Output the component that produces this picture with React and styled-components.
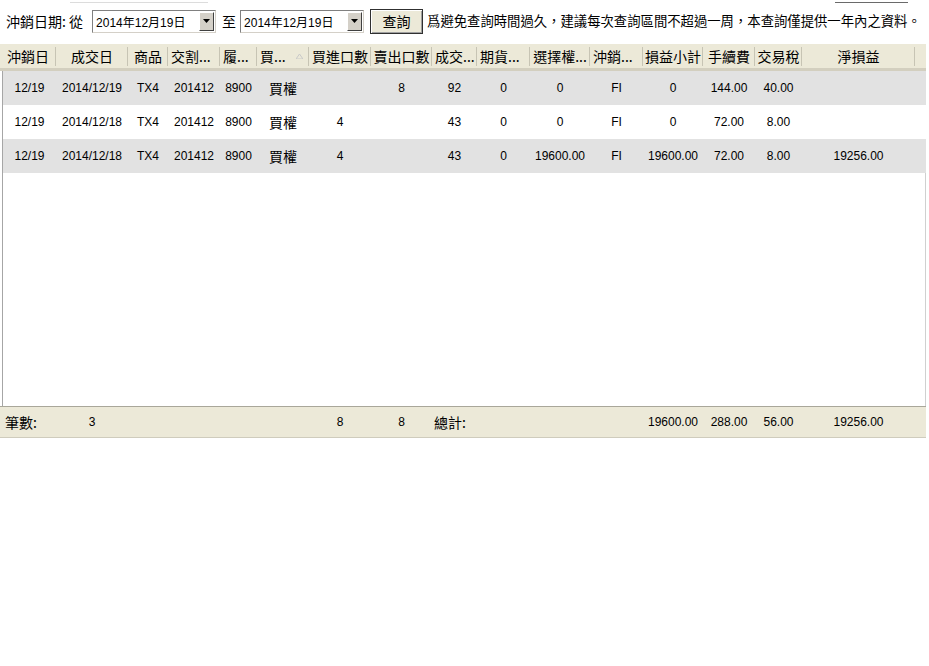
import React from 'react';
import styled, { createGlobalStyle } from 'styled-components';

const GlobalStyle = createGlobalStyle`
  html, body {
    margin: 0;
    padding: 0;
    background: #fff;
  }
  body {
    font-family: "Liberation Sans", "Noto Sans CJK TC", sans-serif;
    color: #000;
  }
`;

const COLS = [56, 72, 40, 52, 37, 52, 62, 61, 45, 53, 60, 53, 60, 52, 47, 113];
const headTemplate = COLS.map((w) => `${w}px`).join(' ') + ' 1fr';
const bodyTemplate = [COLS[0] - 3, ...COLS.slice(1)].map((w) => `${w}px`).join(' ');

const cjk = `"Noto Sans CJK TC", "Liberation Sans", sans-serif`;

// Styled components
const Page = styled.div`
  width: 929px;
  height: 666px;
  overflow: hidden;
  background: #fff;
`;

const TopEdge = styled.div`
  display: flex;
  height: 8px;
  padding-top: 2px;
  box-sizing: border-box;
`;

const EdgeLine = styled.div`
  height: 1px;
  flex-shrink: 0;
  margin-left: ${(p) => p.$left}px;
  width: ${(p) => p.$width}px;
  background: ${(p) => p.$color};
`;

const Toolbar = styled.div`
  display: flex;
  align-items: center;
  height: 26px;
  padding-left: 6px;
  margin-bottom: 10px;
  white-space: nowrap;
  & > * {
    flex-shrink: 0;
  }
`;

const Label = styled.span`
  font-family: ${cjk};
  font-size: 14px;
  line-height: 1;
  margin-right: ${(p) => p.$gap || 0}px;
`;

const Combo = styled.div`
  display: flex;
  align-items: center;
  width: 124px;
  height: 23px;
  box-sizing: border-box;
  border-top: 1px solid #808080;
  border-left: 1px solid #808080;
  border-right: 1px solid #d4d0c8;
  border-bottom: 1px solid #d4d0c8;
  background: #fff;
  margin-right: ${(p) => p.$gap || 0}px;
`;

const ComboText = styled.span`
  flex: 1;
  padding-left: 3px;
  font-size: 12px;
  font-family: "Liberation Sans", "Noto Sans CJK TC", sans-serif;
`;

const ComboArrow = styled.div`
  width: 15px;
  height: 19px;
  margin-right: 1px;
  box-sizing: border-box;
  background: #d4d0c8;
  border-top: 1px solid #fff;
  border-left: 1px solid #fff;
  border-right: 1px solid #404040;
  border-bottom: 1px solid #404040;
  display: flex;
  align-items: center;
  justify-content: center;
`;

const Button = styled.button`
  width: 53px;
  height: 25px;
  margin: 0 4px 0 0;
  padding: 0;
  box-sizing: border-box;
  background: #ece9d8;
  border: 1px solid #303030;
  box-shadow: inset 1px 1px 0 #fff, inset -1px -1px 0 #a0a0a0;
  font-family: ${cjk};
  font-size: 14px;
  color: #000;
`;

const Notice = styled.span`
  font-family: ${cjk};
  font-size: 13.35px;
  line-height: 1;
`;

const Grid = styled.div`
  width: 926px;
  display: flex;
  flex-direction: column;
`;

const Header = styled.div`
  display: grid;
  grid-template-columns: ${headTemplate};
  height: 24px;
  background: #ece9d8;
  border-bottom: 3px solid #d3cfbf;
`;

const HeadCell = styled.div`
  position: relative;
  display: flex;
  align-items: center;
  justify-content: ${(p) => (p.$left ? 'flex-start' : 'center')};
  padding-left: ${(p) => (p.$left ? 3 : 0)}px;
  font-family: ${cjk};
  font-size: 14px;
  white-space: nowrap;
  overflow: hidden;
  &::after {
    content: '';
    position: absolute;
    right: 0;
    top: 3px;
    bottom: 2px;
    width: 1px;
    background: ${(p) => (p.$last ? 'transparent' : '#c7c4b4')};
  }
`;

const SortMark = styled.svg`
  position: absolute;
  right: 6px;
  top: 10px;
`;

const Body = styled.div`
  height: 335px;
  padding-left: 3px;
  background: linear-gradient(
    to right,
    transparent 2px,
    #a6a6a6 2px,
    #a6a6a6 3px,
    transparent 3px,
    transparent 925px,
    #d0d0d0 925px
  );
`;

const Row = styled.div`
  display: grid;
  grid-template-columns: ${bodyTemplate};
  height: 34px;
  background: ${(p) => (p.$shade ? '#e2e2e2' : '#fff')};
`;

const Cell = styled.div`
  display: flex;
  align-items: center;
  justify-content: center;
  font-family: ${(p) => (p.$cjk ? cjk : '"Liberation Sans", sans-serif')};
  font-size: ${(p) => (p.$cjk ? 14 : 12)}px;
  white-space: nowrap;
`;

const Footer = styled.div`
  display: grid;
  grid-template-columns: ${headTemplate};
  height: 30px;
  background: #ece9d8;
  border-top: 1px solid #a9a79a;
  border-bottom: 1px solid #cfccbd;
`;

const FootCell = styled(Cell)`
  justify-content: ${(p) => (p.$left ? 'flex-start' : 'center')};
  padding-left: ${(p) => (p.$left ? p.$left : 0)}px;
`;

const DownArrow = () => (
  <svg width="7" height="4" viewBox="0 0 7 4">
    <path d="M0 0h7L3.5 4z" fill="#000" />
  </svg>
);

const DateCombo = ({ value, gap }) => (
  <Combo $gap={gap}>
    <ComboText>{value}</ComboText>
    <ComboArrow>
      <DownArrow />
    </ComboArrow>
  </Combo>
);

const headers = [
  '沖銷日', '成交日', '商品', '交割...', '履...', '買...', '買進口數', '賣出口數',
  '成交...', '期貨...', '選擇權...', '沖銷...', '損益小計', '手續費', '交易稅', '淨損益',
];

const rows = [
  ['12/19', '2014/12/19', 'TX4', '201412', '8900', '買權', '', '8', '92', '0', '0', 'FI', '0', '144.00', '40.00', ''],
  ['12/19', '2014/12/18', 'TX4', '201412', '8900', '買權', '4', '', '43', '0', '0', 'FI', '0', '72.00', '8.00', ''],
  ['12/19', '2014/12/18', 'TX4', '201412', '8900', '買權', '4', '', '43', '0', '19600.00', 'FI', '19600.00', '72.00', '8.00', '19256.00'],
];

const footer = ['', '3', '', '', '', '', '8', '8', '', '', '', '', '19600.00', '288.00', '56.00', '19256.00', ''];

// Main component
const App = () => {
  return (
    <Page>
      <GlobalStyle />
      <TopEdge>
        <EdgeLine $left={70} $width={138} $color="#dcdcdc" />
        <EdgeLine $left={627} $width={73} $color="#6a6a6a" />
      </TopEdge>
      <Toolbar>
        <Label $gap={9}>沖銷日期: 從</Label>
        <DateCombo value="2014年12月19日" gap={6} />
        <Label $gap={4}>至</Label>
        <DateCombo value="2014年12月19日" gap={6} />
        <Button>查詢</Button>
        <Notice>爲避免查詢時間過久，建議每次查詢區間不超過一周，本查詢僅提供一年內之資料。</Notice>
      </Toolbar>
      <Grid>
        <Header>
          {headers.map((h, i) => (
            <HeadCell key={h + i} $left={i === 3 || i === 4 || i === 5 || i === 8 || i === 9 || i === 11}>
              {h}
              {i === 5 && (
                <SortMark width="7" height="5" viewBox="0 0 7 5">
                  <path d="M3.5 0L7 5H0z" fill="none" stroke="#c8c8c8" strokeWidth="1" />
                </SortMark>
              )}
            </HeadCell>
          ))}
          <HeadCell $last />
        </Header>
        <Body>
          {rows.map((r, ri) => (
            <Row key={ri} $shade={ri !== 1}>
              {r.map((v, ci) => (
                <Cell key={ci} $cjk={ci === 5}>{v}</Cell>
              ))}
            </Row>
          ))}
        </Body>
        <Footer>
          {footer.map((v, i) => {
            if (i === 0) return <FootCell key={i} $cjk $left={5}>筆數:</FootCell>;
            if (i === 8) return <FootCell key={i} $cjk $left={2}>總計:</FootCell>;
            return <FootCell key={i}>{v}</FootCell>;
          })}
        </Footer>
      </Grid>
    </Page>
  );
};

export default App;
